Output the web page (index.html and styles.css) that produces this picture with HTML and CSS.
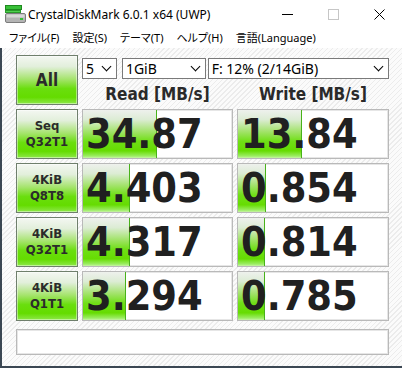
FILE: index.html
```html
<!DOCTYPE html>
<html lang="ja">

<head>
    <meta charset="UTF-8">
    <title>CrystalDiskMark 6.0.1 x64 (UWP)</title>
    <link rel="stylesheet" href="styles.css">
</head>

<body>

    <div class="window">
        <div class="titlebar">
            <svg class="app-icon" width="21" height="20" viewBox="0 0 21 20">
                <rect x="0.5" y="1.5" width="16" height="4" fill="#38c038" stroke="#1f8a1f"/>
                <rect x="0.5" y="6.5" width="15" height="2" fill="#4fd04f" stroke="#2a9a2a"/>
                <rect x="0.5" y="9.5" width="20" height="9" rx="1.5" fill="#b4b4b4" stroke="#7c7c7c"/>
                <rect x="1.5" y="10.5" width="18" height="3" fill="#d8d8d8"/>
                <rect x="15" y="14" width="3" height="2" fill="#34c034"/>
            </svg>
            <span class="title">CrystalDiskMark 6.0.1 x64 (UWP)</span>
            <div class="controls">
                <span class="ctl">
                    <svg width="11" height="11" viewBox="0 0 11 11"><line x1="0" y1="5.5" x2="11" y2="5.5" stroke="#000"/></svg>
                </span>
                <span class="ctl">
                    <svg width="11" height="11" viewBox="0 0 11 11"><rect x="0.5" y="0.5" width="10" height="10" fill="none" stroke="#c6c6c6"/></svg>
                </span>
                <span class="ctl">
                    <svg width="11" height="11" viewBox="0 0 11 11"><path d="M0.5 0.5 L10.5 10.5 M10.5 0.5 L0.5 10.5" stroke="#000" fill="none"/></svg>
                </span>
            </div>
        </div>

        <div class="menubar">
            <span class="menu-item">ファイル(F)</span>
            <span class="menu-item">設定(S)</span>
            <span class="menu-item">テーマ(T)</span>
            <span class="menu-item">ヘルプ(H)</span>
            <span class="menu-item">言語(Language)</span>
        </div>

        <div class="client">
            <div class="board">
                <div class="btn btn-all">All</div>

                <div class="head">
                    <div class="selects">
                        <div class="select sel-count"><span>5</span><i class="chev"></i></div>
                        <div class="select sel-size"><span>1GiB</span><i class="chev"></i></div>
                        <div class="select sel-drive"><span>F: 12% (2/14GiB)</span><i class="chev"></i></div>
                    </div>
                    <div class="captions">
                        <span>Read [MB/s]</span>
                        <span>Write [MB/s]</span>
                    </div>
                </div>

                <!-- results -->
                <div class="btn">Seq<br>Q32T1</div>
                <div class="result"><div class="bar" style="width: 49.7%"></div><span class="value">34.87</span></div>
                <div class="result"><div class="bar" style="width: 42.8%"></div><span class="value">13.84</span></div>

                <div class="btn">4KiB<br>Q8T8</div>
                <div class="result"><div class="bar" style="width: 31.8%"></div><span class="value">4.403</span></div>
                <div class="result"><div class="bar" style="width: 18.4%"></div><span class="value">0.854</span></div>

                <div class="btn">4KiB<br>Q32T1</div>
                <div class="result"><div class="bar" style="width: 31.8%"></div><span class="value">4.317</span></div>
                <div class="result"><div class="bar" style="width: 17.8%"></div><span class="value">0.814</span></div>

                <div class="btn">4KiB<br>Q1T1</div>
                <div class="result"><div class="bar" style="width: 29.1%"></div><span class="value">3.294</span></div>
                <div class="result"><div class="bar" style="width: 17.8%"></div><span class="value">0.785</span></div>

                <div class="comment"></div>
            </div>
        </div>
    </div>

</body>

</html>
```

FILE: styles.css
```css
body {
    margin: 0;
    padding: 0;
    background-color: #3b4753;
    font-family: "Noto Sans", "Noto Sans CJK JP", sans-serif;
    color: #000;
}

.window {
    width: 402px;
    height: 368px;
    display: flex;
    flex-direction: column;
    overflow: hidden;
}

.titlebar {
    height: 28px;
    background-color: #fff;
    display: flex;
    align-items: center;
    padding-left: 5px;
}

.app-icon {
    display: block;
    margin-right: 2px;
}

.title {
    font-size: 12px;
    flex: 1;
}

.controls {
    display: flex;
    height: 28px;
}

.ctl {
    width: 46px;
    display: flex;
    align-items: center;
    justify-content: center;
}

.ctl svg {
    display: block;
}

.menubar {
    height: 17px;
    padding-bottom: 3px;
    background-color: #fff;
    display: flex;
    align-items: center;
    padding-left: 2.5px;
    font-size: 11px;
    font-feature-settings: "palt";
}

.menu-item {
    padding: 0 6.5px;
}

.client {
    flex: 1;
    border-left: 2px solid #3b4753;
    border-bottom: 2px solid #3b4753;
    padding: 7px 0 0 14px;
    background-color: #f8f8f8;
    background-image: repeating-linear-gradient(135deg, #fbfbfb 0, #fbfbfb 2.5px, #ececec 2.5px, #ececec 3.5px);
}

.board {
    display: grid;
    grid-template-columns: 62px 151px 152px;
    grid-template-rows: 50px 50px 50px 50px 50px 30px;
    gap: 4px;
}

.btn {
    box-sizing: border-box;
    border: 1px solid #6f7f6c;
    background: linear-gradient(to bottom, #f4f7f2 0%, #e2efdb 22%, #a6e46e 48%, #6ade0e 68%, #64dc00 86%, #8ee84a 100%);
    box-shadow: inset 0 0 0 1px rgba(255, 255, 255, 0.45);
    display: flex;
    align-items: center;
    justify-content: center;
    text-align: center;
    font-family: "DejaVu Sans Condensed", "DejaVu Sans", sans-serif;
    font-weight: bold;
    font-size: 13px;
    line-height: 16px;
    color: #2b2b2b;
}

.btn-all {
    font-size: 17px;
}

.head {
    grid-column: 2 / 4;
    display: flex;
    flex-direction: column;
}

.selects {
    margin-top: 3px;
    display: flex;
    height: 21px;
}

.select {
    box-sizing: border-box;
    height: 21px;
    border: 1px solid #7a7a7a;
    background-color: #fff;
    display: flex;
    align-items: center;
    justify-content: space-between;
    padding: 0 6px 0 3px;
    font-size: 14px;
}

.sel-count {
    width: 35px;
}

.sel-size {
    width: 84px;
    margin-left: 5px;
}

.sel-drive {
    width: 182px;
    margin-left: 2px;
}

.chev {
    width: 6px;
    height: 6px;
    border-right: 1.6px solid #000;
    border-bottom: 1.6px solid #000;
    transform: rotate(45deg);
    margin-top: -5px;
}

.captions {
    flex: 1;
    display: flex;
    gap: 4px;
    align-items: flex-end;
    font-family: "DejaVu Sans Condensed", "DejaVu Sans", sans-serif;
    font-weight: bold;
    font-size: 17px;
    color: #2a2a2a;
    line-height: 22px;
}

.captions span {
    text-align: center;
}

.captions span:first-child {
    width: 151px;
}

.captions span:last-child {
    width: 152px;
}

.result {
    position: relative;
    box-sizing: border-box;
    border: 1px solid #b9b9b9;
    background-color: #fff;
    box-shadow: inset 0 0 0 1px #e6e6e6;
    display: flex;
    align-items: center;
    overflow: hidden;
}

.bar {
    position: absolute;
    left: 0;
    top: 0;
    bottom: 0;
    box-sizing: border-box;
    border-right: 1px solid #48b21a;
    background: linear-gradient(to bottom, #eef1ed 0%, #dcecd4 20%, #a2e36a 45%, #70df16 65%, #66dc02 85%, #9ced64 96%, #c8f4a8 100%);
}

.value {
    position: relative;
    padding-left: 3px;
    font-family: "DejaVu Sans Condensed", "DejaVu Sans", sans-serif;
    font-weight: bold;
    font-size: 41px;
    line-height: 48px;
    color: #202020;
}

.comment {
    grid-column: 1 / 4;
    margin-top: 4px;
    box-sizing: border-box;
    border: 1px solid #b9b9b9;
    background-color: #fff;
    box-shadow: inset 0 0 0 1px #e6e6e6;
}
```
